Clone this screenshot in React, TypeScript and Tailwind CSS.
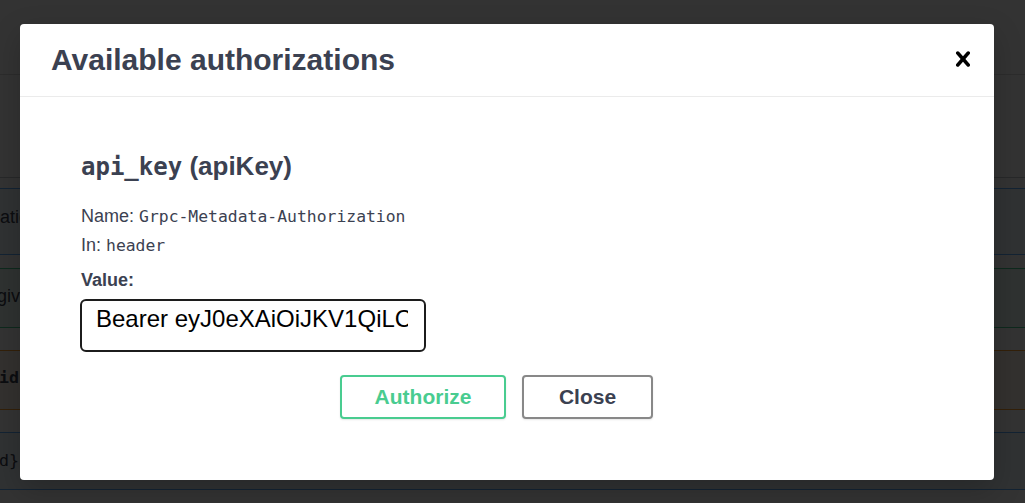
import React from 'react';

const sans = "font-['Liberation_Sans',Arial,sans-serif]";
const mono = "font-['DejaVu_Sans_Mono',monospace]";

// page that sits behind the backdrop; only its left and right edges show
function BackgroundPage() {
  return (
    <div className="w-full">
      <div className="h-[75px] border-b border-[#dcdcdc] bg-white" />
      <div className="h-[103px] border-b border-[rgba(59,65,81,0.3)] bg-white" />
      <div className="h-[10px]" />

      <div className="flex h-[67px] items-center border-y border-[#61affe] bg-[rgba(97,175,254,0.1)]">
        <span className="-ml-[52px] -mt-[8px] text-[18px] text-[#3b4151]">Automatic</span>
      </div>
      <div className="h-[13px]" />

      <div className="flex h-[60px] items-center border-y border-[#49cc90] bg-[rgba(73,204,144,0.1)]">
        <span className="-ml-[30px] -mt-[4px] text-[18px] text-[#3b4151]">Forgive</span>
      </div>
      <div className="h-[22px]" />

      <div className="flex h-[60px] items-center border-y border-[#fca130] bg-[rgba(252,161,48,0.1)]">
        <span className={`${mono} -ml-[71px] -mt-[4px] text-[16.6px] font-bold text-[#3b4151]`}>/pets/{'{'}id{'}'}</span>
      </div>
      <div className="h-[22px]" />

      <div className="flex h-[58px] items-center border-y border-[#61affe] bg-[rgba(97,175,254,0.1)]">
        <span className={`${mono} -ml-[81px] text-[16.6px] text-[#3b4151]`}>/pets/{'{'}id{'}'}</span>
      </div>
    </div>
  );
}

function CloseIcon() {
  return (
    <svg viewBox="0 0 20 20" className="h-[30px] w-[30px]" aria-hidden="true">
      <path
        fill="#000"
        d="M14.348 14.849c-.469.469-1.229.469-1.697 0L10 11.819l-2.651 3.029c-.469.469-1.229.469-1.697 0-.469-.469-.469-1.229 0-1.697l2.758-3.15-2.759-3.152c-.469-.469-.469-1.228 0-1.697.469-.469 1.228-.469 1.697 0L10 8.183l2.651-3.031c.469-.469 1.228-.469 1.697 0 .469.469.469 1.229 0 1.697l-2.758 3.152 2.758 3.15c.469.469.469 1.229 0 1.698z"
      />
    </svg>
  );
}

export default function App() {
  return (
    <div className={`${sans} relative h-[503px] w-full overflow-hidden bg-white`}>
      <BackgroundPage />

      {/* backdrop */}
      <div className="absolute inset-0 bg-black/80" />

      {/* modal */}
      <div className="absolute left-[20px] top-[24px] h-[456px] w-[974px] rounded-[4px] bg-white shadow-[0_10px_30px_rgba(0,0,0,0.2)]">
        <div className="flex h-[73px] items-center justify-between border-b border-[#ebebeb] pl-[31px] pr-[16px]">
          <h3 className="text-[30px] font-bold leading-none text-[#3b4151]">Available authorizations</h3>
          <button type="button" className="-mt-[3px]">
            <CloseIcon />
          </button>
        </div>

        <div className="pl-[61px] pt-[54px] text-[#3b4151]">
          <h4 className="text-[26px] font-bold leading-[30px]">
            <code className={`${mono} text-[24px] font-bold`}>api_key</code> (apiKey)
          </h4>

          <p className="mt-[20px] text-[18px] leading-[28px]">
            Name: <code className={`${mono} text-[16.4px]`}>Grpc-Metadata-Authorization</code>
          </p>
          <p className="text-[18px] leading-[28px]">
            In: <code className={`${mono} text-[16.4px]`}>header</code>
          </p>

          <label className="mt-[6px] block text-[18px] font-bold leading-[28px]">Value:</label>
          <input
            type="text"
            readOnly
            value="Bearer eyJ0eXAiOiJKV1QiLCJhbGciOiJIUzI1NiJ9"
            className={`${sans} -ml-[1px] mt-[5px] block h-[53px] w-[346px] rounded-[6px] border-2 border-[#1c1c1c] pb-[18px] pl-[14px] pr-[16px] pt-[4px] text-[24px] text-black outline-none`}
          />
        </div>

        <div className="ml-[320px] mt-[23px] flex gap-[16px]">
          <button
            type="button"
            className="h-[44px] w-[166px] rounded-[4px] border-2 border-[#49cc90] bg-white text-[21px] font-bold text-[#49cc90] shadow-[0_1px_2px_rgba(0,0,0,0.1)]"
          >
            Authorize
          </button>
          <button
            type="button"
            className="h-[44px] w-[131px] rounded-[4px] border-2 border-[#888] bg-white text-[21px] font-bold text-[#3b4151] shadow-[0_1px_2px_rgba(0,0,0,0.1)]"
          >
            Close
          </button>
        </div>
      </div>
    </div>
  );
}
